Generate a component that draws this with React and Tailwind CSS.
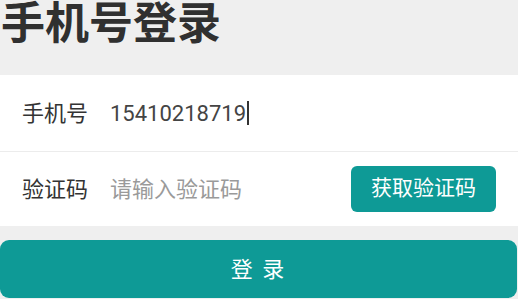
import React from 'react';

const font = { fontFamily: 'Roboto, "Noto Sans CJK SC", sans-serif' };

export default function App() {
  return (
    <div
      className="w-[518px] h-[299px] overflow-hidden bg-[#efefef] text-[#333]"
      style={font}
    >
      {/* Title */}
      <div className="h-[75px] pt-[1px]">
        <h1 className="pl-[1px] text-[44px] leading-[46px] font-bold text-[#303030]">手机号登录</h1>
      </div>

      {/* Phone row */}
      <div className="flex items-center h-[76px] bg-white pl-[22px] text-[22px]">
        <span className="w-[88px]">手机号</span>
        <span className="text-[#444]">15410218719</span>
        <span className="ml-[1px] w-[1.5px] h-[24px] bg-[#333]" />
      </div>
      <div className="h-px bg-[#ececec]" />

      {/* Code row */}
      <div className="flex items-center h-[74px] bg-white pl-[22px] pr-[22px] text-[22px]">
        <span className="w-[88px]">验证码</span>
        <span className="flex-1 text-[#9a9a9a]">请输入验证码</span>
        <button className="w-[145px] h-[46px] rounded-[6px] bg-[#0e9a96] text-white text-[21px]">
          获取验证码
        </button>
      </div>

      {/* Login */}
      <div className="mt-[14px]">
        <button className="w-[517px] h-[58px] rounded-[9px] bg-[#0e9a96] text-white text-[22px] tracking-[2px]">
          登 录
        </button>
      </div>
    </div>
  );
}
